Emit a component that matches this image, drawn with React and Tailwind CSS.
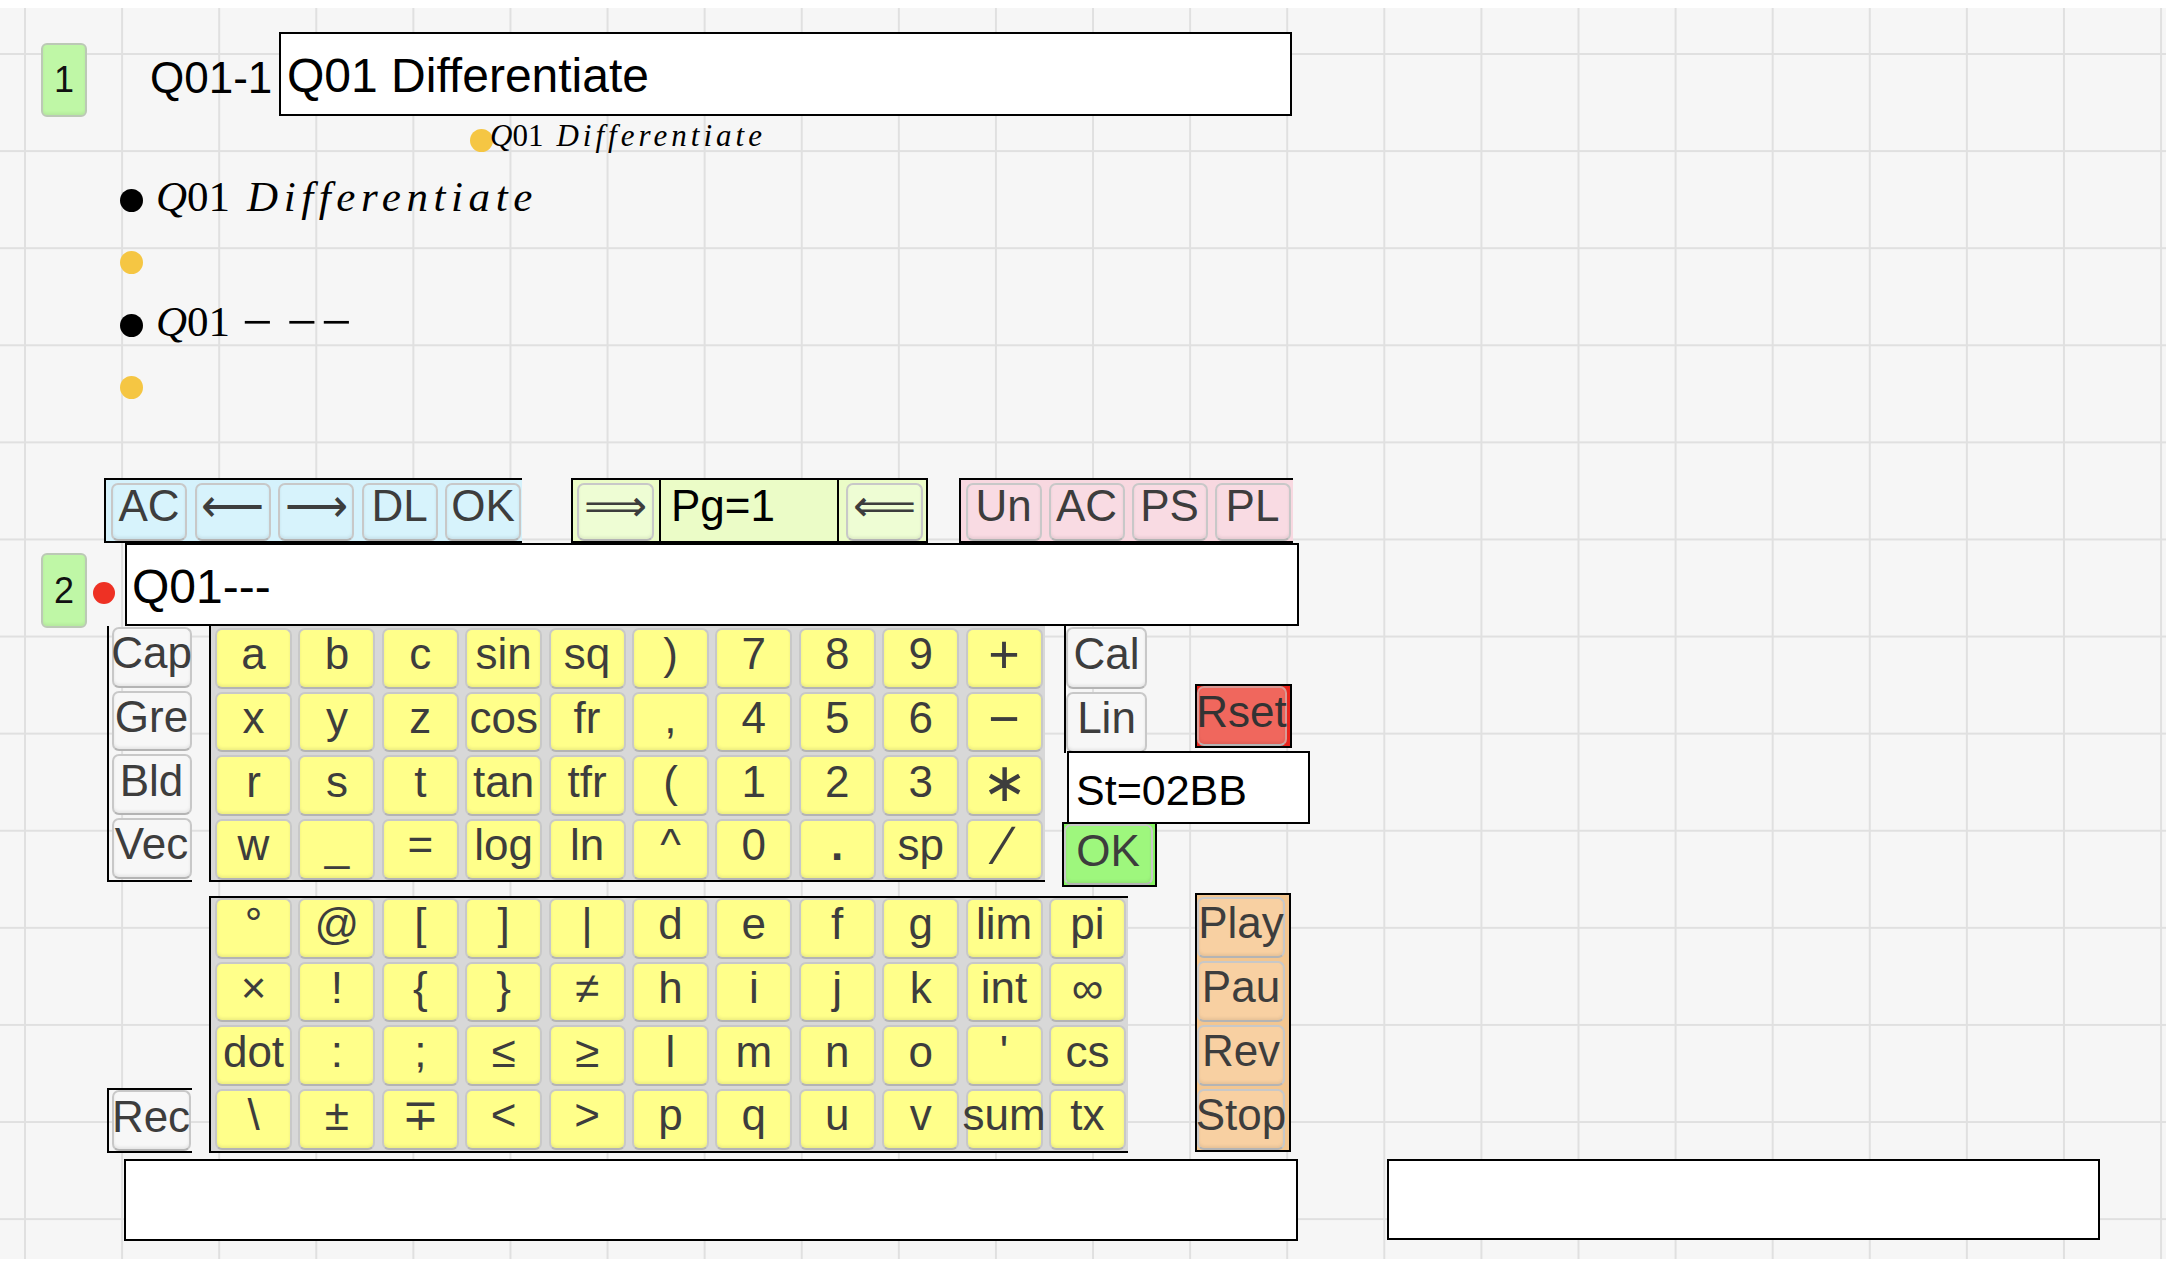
const KEYS1 = [
  ['a', 'b', 'c', 'sin', 'sq', ')', '7', '8', '9', '+'],
  ['x', 'y', 'z', 'cos', 'fr', ',', '4', '5', '6', '−'],
  ['r', 's', 't', 'tan', 'tfr', '(', '1', '2', '3', '∗'],
  ['w', '_', '=', 'log', 'ln', '^', '0', '.', 'sp', '∕'],
];

const KEYS2 = [
  ['°', '@', '[', ']', '|', 'd', 'e', 'f', 'g', 'lim', 'pi'],
  ['×', '!', '{', '}', '≠', 'h', 'i', 'j', 'k', 'int', '∞'],
  ['dot', ':', ';', '≤', '≥', 'l', 'm', 'n', 'o', "'", 'cs'],
  ['\\', '±', '∓', '<', '>', 'p', 'q', 'u', 'v', 'sum', 'tx'],
];

// operator glyphs are drawn a bit larger in the original
const BIG = ['+', '−', '∗', '∕'];

function Key({ label, className = '' }) {
  return (
    <div
      className={`flex items-center justify-center whitespace-nowrap rounded-[7px] border-2 border-[#c8c8c8] border-b-[#b4b4b4] leading-none text-[#3d3d3d] shadow-[inset_0_-2px_3px_rgba(0,0,0,0.07)] ${className}`}
    >
      {label}
    </div>
  );
}

function NumButton({ n, className = '' }) {
  return (
    <div
      className={`flex w-[46px] items-center justify-center rounded-[6px] border-2 border-[#bcc9b6] bg-[#bff7a6] text-[36px] leading-none text-[#111] shadow-[inset_0_-2px_3px_rgba(0,0,0,0.06)] ${className}`}
    >
      {n}
    </div>
  );
}

function Dot({ color, size = 'h-[23px] w-[23px]' }) {
  return <div className={`${size} shrink-0 rounded-full ${color}`} />;
}

function MathLine({ children, className = '' }) {
  return (
    <div className={`whitespace-nowrap font-['Liberation_Serif',serif] leading-none text-black ${className}`}>
      {children}
    </div>
  );
}

export default function App() {
  return (
    <div className="min-h-[1262px] bg-white pt-[8px] font-['Liberation_Sans',Arial,sans-serif]">
      <div className="h-[1251px] bg-[#f6f6f6] bg-[image:linear-gradient(to_right,#e0e0e0_2px,transparent_2px),linear-gradient(to_bottom,#e0e0e0_2px,transparent_2px)] pl-[41px] pt-[24px] [background-position:24px_45px] [background-size:97.1px_97.1px]">
        {/* row 1 */}
        <div className="flex h-[84px] items-start">
          <NumButton n="1" className="mt-[11px] h-[74px]" />
          <div className="flex h-[84px] w-[192px] items-center pl-[63px] pt-[7px] text-[44px] leading-none text-black">
            Q01-1
          </div>
          <div className="flex h-[84px] w-[1013px] items-center border-2 border-black bg-white pl-[6px] pt-[4px] text-[48px] leading-none text-black">
            Q01 Differentiate
          </div>
        </div>

        {/* small rendered line */}
        <div className="ml-[429px] mt-[12px] flex h-[24px] items-center">
          <Dot color="bg-[#f5c643]" />
          <MathLine className="-ml-[3px] pb-[10px] text-[31px]">
            <span className="italic">Q</span>
            <span>01</span>
            <span className="ml-[13px] italic tracking-[0.13em]">Differentiate</span>
          </MathLine>
        </div>

        {/* rendered list */}
        <div className="ml-[79px] mt-[17px] flex flex-col">
          <div className="flex h-[62.5px] items-center">
            <Dot color="bg-black" />
            <MathLine className="ml-[13px] pb-[7px] text-[43px]">
              <span className="italic">Q</span>
              <span>01</span>
              <span className="ml-[17px] italic tracking-[0.13em]">Differentiate</span>
            </MathLine>
          </div>
          <div className="flex h-[62.5px] items-center">
            <Dot color="bg-[#f5c643]" />
          </div>
          <div className="flex h-[62.5px] items-center">
            <Dot color="bg-black" />
            <MathLine className="ml-[13px] pb-[7px] text-[43px]">
              <span className="italic">Q</span>
              <span>01</span>
              <span className="ml-[12px] align-[-4px] text-[54px]">−</span>
              <span className="ml-[14px] align-[-4px] text-[54px] tracking-[4px]">−−</span>
            </MathLine>
          </div>
          <div className="flex h-[62.5px] items-center">
            <Dot color="bg-[#f5c643]" />
          </div>
        </div>

        {/* toolbar */}
        <div className="ml-[63px] mt-[59px] flex items-start">
          <div className="flex h-[65px] w-[418px] gap-[7.5px] border-b-2 border-l-2 border-t-2 border-black bg-[#d5f2fc] pl-[5px] pt-[3px]">
            {['AC', '⟵', '⟶', 'DL', 'OK'].map((t) => (
              <Key key={t} label={t} className="h-[58px] w-[76px] bg-[#d7f3fc] pb-[13px] text-[44px]" />
            ))}
          </div>
          <div className="ml-[49px] flex h-[65px] w-[357px] border-2 border-black bg-[#ebfcc7] pl-[4px]">
            <Key label="⟹" className="mt-[3px] h-[58px] w-[77px] bg-[#eefdd4] pb-[13px] text-[44px]" />
            <div className="ml-[5px] flex w-[180px] items-center border-l-2 border-r-2 border-black pb-[10px] pl-[10px] text-[44px] leading-none text-black">
              Pg=1
            </div>
            <Key label="⟸" className="ml-[7px] mt-[3px] h-[58px] w-[77px] bg-[#eefdd4] pb-[13px] text-[44px]" />
          </div>
          <div className="ml-[30.5px] flex h-[65px] w-[334.5px] gap-[7px] border-b-2 border-l-2 border-t-2 border-black bg-[#f8d8e0] pl-[5px] pt-[3px]">
            {['Un', 'AC', 'PS', 'PL'].map((t) => (
              <Key key={t} label={t} className="h-[58px] w-[76px] bg-[#f9dbe3] pb-[13px] text-[44px]" />
            ))}
          </div>
        </div>

        {/* row 2 */}
        <div className="flex h-[83px] items-start">
          <NumButton n="2" className="mt-[10px] h-[75px]" />
          <Dot color="bg-[#ee3124]" size="ml-[6px] mt-[39px] h-[22px] w-[22px]" />
          <div className="ml-[10px] flex h-[83px] w-[1174px] items-center border-2 border-black bg-white pl-[5px] pt-[4px] text-[48px] leading-none text-black">
            Q01---
          </div>
        </div>

        {/* keyboard top half */}
        <div className="ml-[65.5px] flex items-start">
          <div className="flex h-[255.6px] w-[85.5px] flex-col gap-[3.2px] border-b-2 border-l-2 border-black pl-[3px] pt-[1px]">
            {['Cap', 'Gre', 'Bld', 'Vec'].map((t) => (
              <Key key={t} label={t} className="h-[60.5px] w-[80px] bg-[#f7f7f7] pb-[8px] text-[44px]" />
            ))}
          </div>
          <div className="ml-[17px] grid w-[836px] grid-cols-[repeat(10,77px)] gap-x-[6.4px] gap-y-[3.2px] border-b-2 border-l-2 border-black bg-[#d8d8d8] pl-[4px] pt-[2px]">
            {KEYS1.flat().map((t, i) => (
              <Key
                key={i}
                label={t}
                className={`h-[60.5px] bg-[#ffff8a] pb-[8px] ${BIG.includes(t) ? 'text-[54px]' : 'text-[44px]'} ${t === '.' ? 'font-bold' : ''}`}
              />
            ))}
          </div>
          <div className="ml-[16.5px] flex flex-col">
            <div className="flex items-start">
              <div className="ml-[2px] flex h-[127px] flex-col gap-[3px] border-l-2 border-black pl-[0.5px] pt-[1px]">
                <Key label="Cal" className="h-[61.5px] w-[81px] bg-[#f7f7f7] pb-[8px] text-[44px]" />
                <Key label="Lin" className="h-[61.5px] w-[81px] bg-[#f7f7f7] pb-[8px] text-[44px]" />
              </div>
              <div className="ml-[47.5px] mt-[58px] h-[64px] w-[97.5px] border-2 border-black bg-[#e8241c]">
                <Key label="Rset" className="h-[60px] w-[90px] border-[#d99a95] bg-[#f0675d] pb-[8px] text-[44px] text-[#333]" />
              </div>
            </div>
            <div className="-mt-[2px] ml-[5.5px] flex h-[73px] w-[242.5px] items-center border-2 border-black bg-white pl-[7px] pt-[6px] text-[43px] leading-none text-black">
              St=02BB
            </div>
            <div className="-mt-[2px] h-[65px] w-[95px] border-2 border-black bg-[#86f560]">
              <Key label="OK" className="h-[61px] w-[89px] bg-[#9ef77d] pb-[8px] text-[44px]" />
            </div>
          </div>
        </div>

        {/* keyboard bottom half */}
        <div className="ml-[65.5px] mt-[6px] flex items-start">
          <div className="h-[65px] w-[85.5px] self-end border-b-2 border-l-2 border-t-2 border-black pl-[3px]">
            <Key label="Rec" className="h-[61px] w-[79px] bg-[#f7f7f7] pb-[8px] text-[44px]" />
          </div>
          <div className="ml-[17px] mt-[3px] grid w-[919px] grid-cols-[repeat(11,77px)] gap-x-[6.4px] gap-y-[3.2px] border-b-2 border-l-2 border-t-2 border-black bg-[#d8d8d8] pb-[1.5px] pl-[4px]">
            {KEYS2.flat().map((t, i) => (
              <Key key={i} label={t} className="h-[60.5px] bg-[#ffff8a] pb-[8px] text-[44px]" />
            ))}
          </div>
          <div className="ml-[67px] flex h-[259px] w-[96px] flex-col gap-[3.5px] border-2 border-black bg-[#f3c690] pt-[2px]">
            {['Play', 'Pau', 'Rev', 'Stop'].map((t) => (
              <Key key={t} label={t} className="h-[60.5px] w-[88px] bg-[#f8d0a2] pb-[8px] text-[44px]" />
            ))}
          </div>
        </div>

        {/* bottom boxes */}
        <div className="mt-[6px] flex items-start">
          <div className="ml-[83px] h-[82px] w-[1174px] border-2 border-black bg-white" />
          <div className="ml-[89px] h-[81px] w-[713px] border-2 border-black bg-white" />
        </div>
      </div>
    </div>
  );
}
